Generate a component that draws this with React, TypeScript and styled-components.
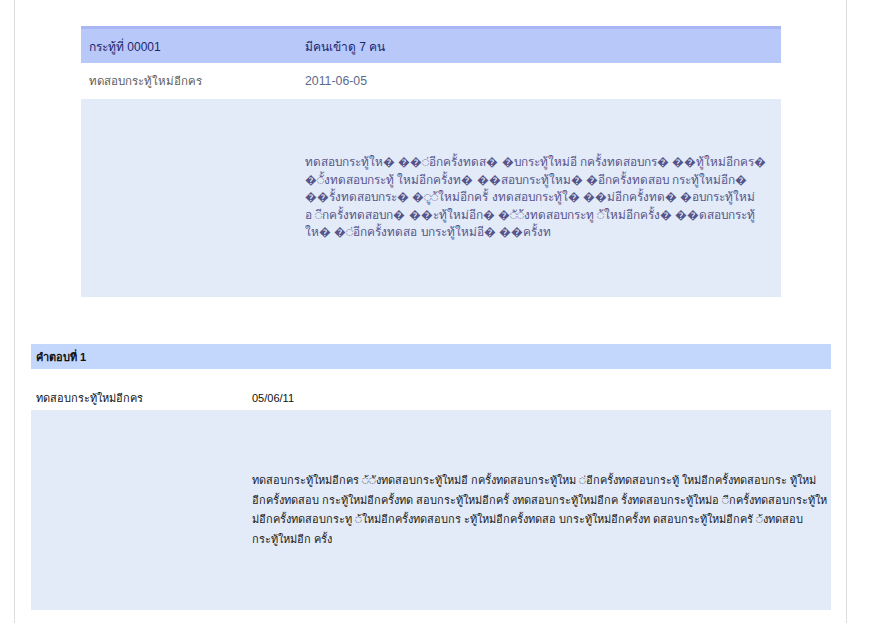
import React from "react";
import styled, { createGlobalStyle } from "styled-components";

const GlobalStyle = createGlobalStyle`
	body {
		margin: 0;
		background: #fff;
		font-family: "Liberation Sans", Arial, sans-serif;
	}
`;

const Panel = styled.div`
	margin-left: 14px;
	width: 833px;
	min-height: 623px;
	border-left: 1px solid #dcdcdc;
	border-right: 1px solid #dcdcdc;
	padding-top: 26px;
	box-sizing: border-box;
`;

const TopicTable = styled.div`
	margin-left: 66px;
	width: 700px;
`;

const TopicRow = styled.div<{ $h: number; $bg?: string }>`
	display: grid;
	grid-template-columns: 216px 1fr;
	align-items: center;
	height: ${({ $h }) => $h}px;
	padding-left: 8px;
	box-sizing: border-box;
	background: ${({ $bg }) => $bg || "transparent"};
	font-size: 11.5px;
`;

const TopicHeader = styled(TopicRow)`
	border-top: 3px solid #a8b7f4;
	color: #1b2670;
	font-size: 12px;
`;

const Cell = styled.div<{ $tone?: string; $size?: number }>`
	color: ${({ $tone }) => $tone || "inherit"};
	font-size: ${({ $size }) => ($size ? `${$size}px` : "inherit")};
	white-space: nowrap;
`;

const TopicText = styled.div`
	color: #55558a;
	font-size: 11.8px;
	line-height: 17.5px;
	white-space: nowrap;
`;

const Reply = styled.div`
	margin: 47px 0 0 16px;
	width: 800px;
`;

const ReplyHeader = styled.div`
	height: 25px;
	display: flex;
	align-items: center;
	padding-left: 5px;
	background: #c3d6fc;
	color: #111;
	font-size: 11px;
	font-weight: bold;
`;

const ReplyRow = styled.div<{ $h: number; $bg?: string; $top?: number }>`
	margin-top: ${({ $top }) => $top || 0}px;
	height: ${({ $h }) => $h}px;
	display: grid;
	grid-template-columns: 216px 1fr;
	align-items: center;
	padding-left: 5px;
	background: ${({ $bg }) => $bg || "transparent"};
	font-size: 11px;
	color: #111;
`;

const ReplyText = styled.div`
	color: #1a1a1a;
	font-size: 11px;
	line-height: 19.5px;
	white-space: nowrap;
`;

const R = "\uFFFD";
const D = "\u25CC";

const topicText = [
	`ทดสอบกระทู้ให${R} ${R}${R}${D}่อีกครั้งทดส${R} ${R}บกระทู้ใหม่อี กครั้งทดสอบกร${R} ${R}${R}ทู้ใหม่อีกคร${R}`,
	`${R}${D}ั้งทดสอบกระทู้ ใหม่อีกครั้งท${R} ${R}${R}สอบกระทู้ใหม${R} ${R}อีกครั้งทดสอบ กระทู้ใหม่อีก${R}`,
	`${R}${R}รั้งทดสอบกระ${R} ${R}${D}ู${D}้ใหม่อีกครั้ งทดสอบกระทู้ใ${R} ${R}${R}ม่อีกครั้งทด${R} ${R}อบกระทู้ใหม่`,
	`อ ${D}ีกครั้งทดสอบก${R} ${R}${R}ะทู้ใหม่อีก${R} ${R}${D}ั${D}้งทดสอบกระทู ${D}้ใหม่อีกครั้ง${R} ${R}${R}ดสอบกระทู้`,
	`ให${R} ${R}${D}่อีกครั้งทดสอ บกระทู้ใหม่อี${R} ${R}${R}ครั้งท`,
];

const replyText = [
	`ทดสอบกระทู้ใหม่อีกคร ${D}้${D}ังทดสอบกระทู้ใหม่อี กครั้งทดสอบกระทู้ใหม ${D}่อีกครั้งทดสอบกระทู้ ใหม่อีกครั้งทดสอบกระ ทู้ใหม่`,
	`อีกครั้งทดสอบ กระทู้ใหม่อีกครั้งทด สอบกระทู้ใหม่อีกครั้ งทดสอบกระทู้ใหม่อีกค รั้งทดสอบกระทู้ใหม่อ ${D}ีกครั้งทดสอบกระทู้ให`,
	`ม่อีกครั้งทดสอบกระทู ${D}้ใหม่อีกครั้งทดสอบกร ะทู้ใหม่อีกครั้งทดสอ บกระทู้ใหม่อีกครั้งท ดสอบกระทู้ใหม่อีกครั ${D}้งทดสอบ`,
	"กระทู้ใหม่อีก ครั้ง",
];

const Lines = ({ lines }: { lines: string[] }) => (
	<>
		{lines.map((l, i) => (
			<React.Fragment key={i}>
				{l}
				{i < lines.length - 1 && <br />}
			</React.Fragment>
		))}
	</>
);

const App = () => {
	return (
		<>
			<GlobalStyle />
			<Panel>
				<TopicTable>
					<TopicHeader $h={37} $bg="#b8c8f9">
						<Cell>กระทู้ที่ 00001</Cell>
						<Cell>มีคนเข้าดู 7 คน</Cell>
					</TopicHeader>
					<TopicRow $h={36}>
						<Cell $tone="#5c5c5c">ทดสอบกระทู้ใหม่อีกคร</Cell>
						<Cell $tone="#5a6a8c" $size={12.3}>2011-06-05</Cell>
					</TopicRow>
					<TopicRow $h={198} $bg="#e3eaf8">
						<div />
						<TopicText>
							<Lines lines={topicText} />
						</TopicText>
					</TopicRow>
				</TopicTable>

				<Reply>
					<ReplyHeader>คำตอบที่ 1</ReplyHeader>
					<ReplyRow $h={25} $top={16}>
						<div>ทดสอบกระทู้ใหม่อีกคร</div>
						<div>05/06/11</div>
					</ReplyRow>
					<ReplyRow $h={200} $bg="#e3eaf8">
						<div />
						<ReplyText>
							<Lines lines={replyText} />
						</ReplyText>
					</ReplyRow>
				</Reply>
			</Panel>
		</>
	);
};

export default App;
